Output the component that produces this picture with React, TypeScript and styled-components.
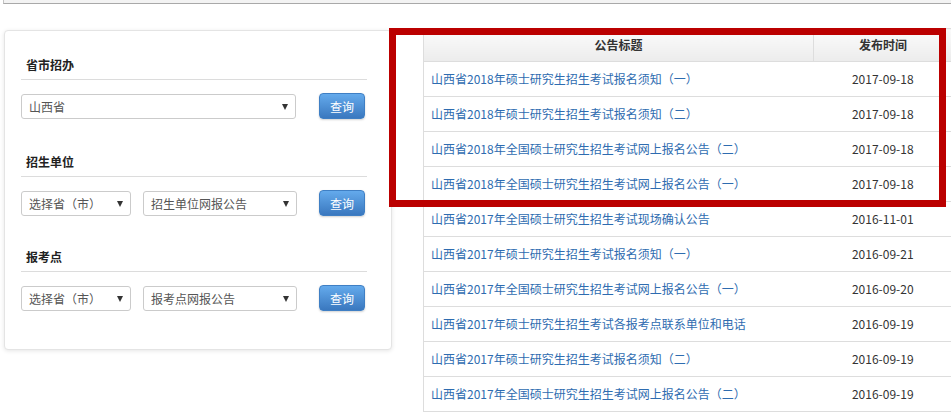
import React from 'react';
import styled, { createGlobalStyle } from 'styled-components';

const GlobalStyle = createGlobalStyle`
  html, body {
    margin: 0;
    padding: 0;
    background: #fff;
    overflow: hidden;
  }
  body {
    font-family: "Noto Sans CJK SC", "Noto Sans", sans-serif;
    font-size: 12px;
    color: #333;
  }
`;

const TopStrip = styled.div`
  height: 3px;
  margin-left: 3px;
  background: #f3f3f3;
  border-left: 1px solid #c4c4c4;
  border-bottom: 1px solid #a9a9a9;
`;

const Main = styled.div`
  display: flex;
  align-items: flex-start;
  padding: 24px 0 0 4px;
`;

const Card = styled.div`
  flex-shrink: 0;
  box-sizing: border-box;
  width: 388px;
  margin-top: 2px;
  padding: 24px 24px 38px 16px;
  background: #fff;
  border: 1px solid #e4e4e4;
  border-radius: 4px;
  box-shadow: 0 1px 4px rgba(0, 0, 0, 0.1);
`;

const Section = styled.div<{ $gap: number }>`
  margin-top: ${({ $gap }) => $gap}px;
`;

const SectionTitle = styled.h4`
  margin: 0;
  padding: 0 0 4px 5px;
  font-size: 12px;
  line-height: 20px;
  font-weight: bold;
  color: #222;
  border-bottom: 1px solid #dcdcdc;
`;

const FormRow = styled.div`
  display: flex;
  align-items: center;
  gap: 12px;
  margin-top: 13px;
`;

const SelectWrap = styled.div<{ $width: number }>`
  position: relative;
  width: ${({ $width }) => $width}px;
  height: 25px;
`;

const Select = styled.select`
  appearance: none;
  box-sizing: border-box;
  width: 100%;
  height: 100%;
  padding: 0 20px 0 7px;
  font-family: inherit;
  font-size: 12px;
  color: #555;
  background: #fff;
  border: 1px solid #cbcbcb;
  border-radius: 3px;
  outline: none;
`;

const Arrow = styled.span`
  position: absolute;
  right: 8px;
  top: 10px;
  width: 0;
  height: 0;
  border-left: 3.5px solid transparent;
  border-right: 3.5px solid transparent;
  border-top: 6px solid #333;
  pointer-events: none;
`;

const QueryButton = styled.button`
  box-sizing: border-box;
  width: 46px;
  height: 26px;
  margin-left: auto;
  margin-right: 2px;
  padding: 0;
  font-family: inherit;
  font-size: 12px;
  color: #fff;
  background: linear-gradient(#64aaec, #3a78bf);
  border: 1px solid #3f7fc4;
  border-radius: 4px;
  box-shadow: 0 1px 2px rgba(0, 0, 0, 0.18);
  cursor: pointer;
`;

const TableArea = styled.div`
  position: relative;
  flex-shrink: 0;
  margin-left: 31px;
`;

const NoticeTable = styled.table`
  width: 530px;
  border-collapse: collapse;
  table-layout: fixed;
  border: 1px solid #ddd;
`;

const HeadCell = styled.th<{ $width?: number }>`
  height: 31px;
  padding: 0 0 1px;
  width: ${({ $width }) => ($width ? `${$width}px` : 'auto')};
  font-size: 12px;
  font-weight: bold;
  color: #333;
  text-align: center;
  background: linear-gradient(#fbfbfb, #ececec);
  border-left: 1px solid #ddd;
  border-bottom: 1px solid #ddd;
`;

const Row = styled.tr`
  border-top: 1px solid #ddd;
`;

const TitleCell = styled.td`
  height: 32px;
  padding: 0 0 2px 7px;
  white-space: nowrap;
`;

const DateCell = styled.td`
  padding: 0 0 2px;
  text-align: center;
  color: #333;
`;

const NoticeLink = styled.a`
  color: #2e6cb0;
  text-decoration: none;
`;

const Highlight = styled.div`
  position: absolute;
  left: -34px;
  top: 0;
  box-sizing: border-box;
  width: 557px;
  height: 179px;
  border: 7px solid #bb0000;
  pointer-events: none;
`;

type Notice = { title: string; date: string };

const notices: Notice[] = [
  { title: '山西省2018年硕士研究生招生考试报名须知（一）', date: '2017-09-18' },
  { title: '山西省2018年硕士研究生招生考试报名须知（二）', date: '2017-09-18' },
  { title: '山西省2018年全国硕士研究生招生考试网上报名公告（二）', date: '2017-09-18' },
  { title: '山西省2018年全国硕士研究生招生考试网上报名公告（一）', date: '2017-09-18' },
  { title: '山西省2017年全国硕士研究生招生考试现场确认公告', date: '2016-11-01' },
  { title: '山西省2017年硕士研究生招生考试报名须知（一）', date: '2016-09-21' },
  { title: '山西省2017年全国硕士研究生招生考试网上报名公告（一）', date: '2016-09-20' },
  { title: '山西省2017年硕士研究生招生考试各报考点联系单位和电话', date: '2016-09-19' },
  { title: '山西省2017年硕士研究生招生考试报名须知（二）', date: '2016-09-19' },
  { title: '山西省2017年全国硕士研究生招生考试网上报名公告（二）', date: '2016-09-19' },
];

const Dropdown: React.FC<{ width: number; value: string }> = ({ width, value }) => (
  <SelectWrap $width={width}>
    <Select defaultValue={value}>
      <option>{value}</option>
    </Select>
    <Arrow />
  </SelectWrap>
);

export default function App() {
  return (
    <>
      <GlobalStyle />
      <TopStrip />
      <Main>
        <Card>
          <Section $gap={0}>
            <SectionTitle>省市招办</SectionTitle>
            <FormRow>
              <Dropdown width={275} value="山西省" />
              <QueryButton>查询</QueryButton>
            </FormRow>
          </Section>
          <Section $gap={33}>
            <SectionTitle>招生单位</SectionTitle>
            <FormRow>
              <Dropdown width={110} value="选择省（市）" />
              <Dropdown width={154} value="招生单位网报公告" />
              <QueryButton>查询</QueryButton>
            </FormRow>
          </Section>
          <Section $gap={31}>
            <SectionTitle>报考点</SectionTitle>
            <FormRow>
              <Dropdown width={110} value="选择省（市）" />
              <Dropdown width={154} value="报考点网报公告" />
              <QueryButton>查询</QueryButton>
            </FormRow>
          </Section>
        </Card>
        <TableArea>
          <NoticeTable>
            <thead>
              <tr>
                <HeadCell $width={389}>公告标题</HeadCell>
                <HeadCell>发布时间</HeadCell>
              </tr>
            </thead>
            <tbody>
              {notices.map((item, index) => (
                <Row key={index}>
                  <TitleCell>
                    <NoticeLink href="#">{item.title}</NoticeLink>
                  </TitleCell>
                  <DateCell>{item.date}</DateCell>
                </Row>
              ))}
            </tbody>
          </NoticeTable>
          <Highlight />
        </TableArea>
      </Main>
    </>
  );
}
